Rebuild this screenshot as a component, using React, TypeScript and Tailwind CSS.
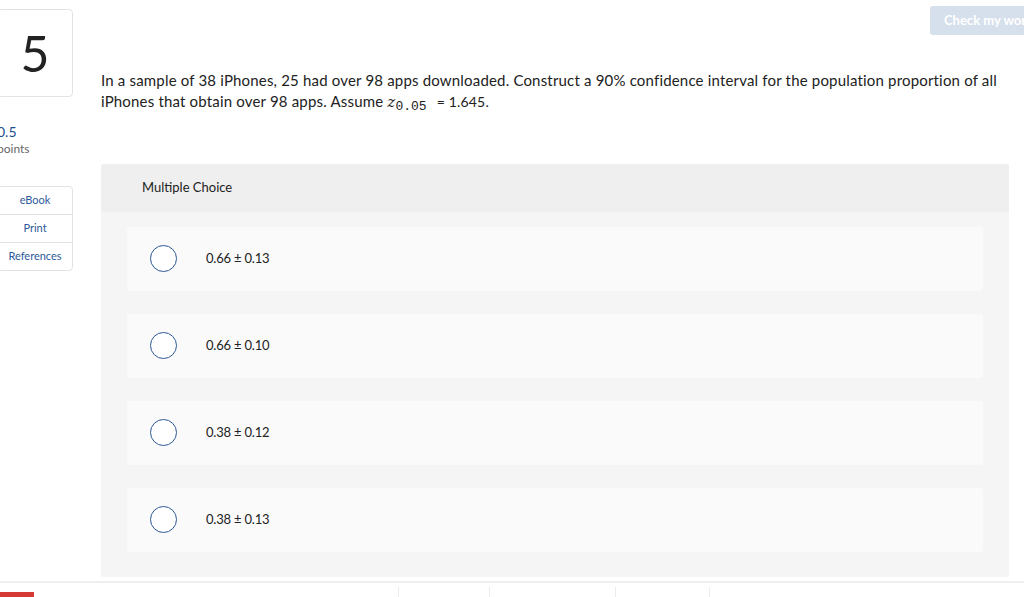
import React from "react";

const options = ["0.66 ± 0.13", "0.66 ± 0.10", "0.38 ± 0.12", "0.38 ± 0.13"];

const SideLinks = () => (
  <div className="mt-[29px] flex flex-col rounded-[4px] border border-[#e3e3e3] text-[11px] text-[#2c5a9a]">
    <div className="flex h-[28px] items-center justify-center border-b border-[#e3e3e3]">eBook</div>
    <div className="flex h-[28px] items-center justify-center border-b border-[#e3e3e3]">Print</div>
    <div className="flex h-[27px] items-center justify-center">References</div>
  </div>
);

const Option = ({ label }: { label: string }) => (
  <div className="flex h-[63.5px] items-center rounded-[3px] bg-[#fafafa] pl-[23px]">
    <span className="h-[27px] w-[27px] shrink-0 rounded-full border-[1.5px] border-[#2a5894] bg-white" />
    <span className="ml-[29px] text-[13px] tracking-[-0.2px] text-[#222]">{label}</span>
  </div>
);

export default function App() {
  return (
    <div className="relative h-[597px] w-[1024px] overflow-hidden bg-white font-['Lato','Open_Sans',sans-serif] text-[#222]">
      <div className="flex">
        {/* left rail */}
        <div className="ml-[-3px] mt-[9px] w-[76px] shrink-0">
          <div className="flex h-[88px] items-center justify-center rounded-[4px] border border-[#e3e3e3] text-[50px] leading-none text-[#222]">
            5
          </div>
          <div className="mt-[26px] text-[14px] leading-[18px] text-[#1d4f8f]">0.5</div>
          <div className="text-[12px] leading-[16px] text-[#666]">points</div>
          <SideLinks />
        </div>

        {/* main */}
        <div className="ml-[28px] min-w-0 flex-1">
          <div className="flex justify-end">
            <button className="mr-[-24px] mt-[6px] h-[29px] w-[118px] shrink-0 whitespace-nowrap rounded-[3px] bg-[#d6e0ec] pl-[14px] text-left text-[13px] font-bold text-white">
              Check my work
            </button>
          </div>
          <p className="mt-[35px] pr-[20px] text-[15px] leading-[21px] tracking-[0.18px] text-[#222]">
            In a sample of 38 iPhones, 25 had over 98 apps downloaded. Construct a 90% confidence interval for the
            population proportion of all iPhones that obtain over 98 apps. Assume{" "}
            <span className="font-['DejaVu_Serif',serif] italic">z</span>
            <sub className="font-['Liberation_Mono',monospace] text-[13px] tracking-normal">0.05</sub>
            <span className="ml-[10px] text-[14px]">= 1.645.</span>
          </p>

          <div className="mr-[15px] mt-[51px] rounded-[3px] bg-[#f5f5f5]">
            <div className="flex h-[48px] items-center rounded-t-[3px] bg-[#efefef] pl-[41px] text-[13px]">
              Multiple Choice
            </div>
            <div className="flex flex-col gap-[23.5px] px-[26px] pb-[25px] pt-[15px]">
              {options.map((o) => (
                <Option key={o} label={o} />
              ))}
            </div>
          </div>
        </div>
      </div>

      {/* bottom bar */}
      <div className="mt-[4px] flex h-[20px] border-t-2 border-[#efefef]">
        <div className="mt-[9px] h-[10px] w-[34px] bg-[#d63a34]" />
        <div className="ml-[364px] mt-[4px] h-full border-l border-[#ececec]" />
        <div className="ml-[90px] mt-[4px] h-full border-l border-[#ececec]" />
        <div className="ml-[125px] mt-[4px] h-full border-l border-[#ececec]" />
        <div className="ml-[93px] mt-[4px] h-full border-l border-[#ececec]" />
      </div>
    </div>
  );
}
